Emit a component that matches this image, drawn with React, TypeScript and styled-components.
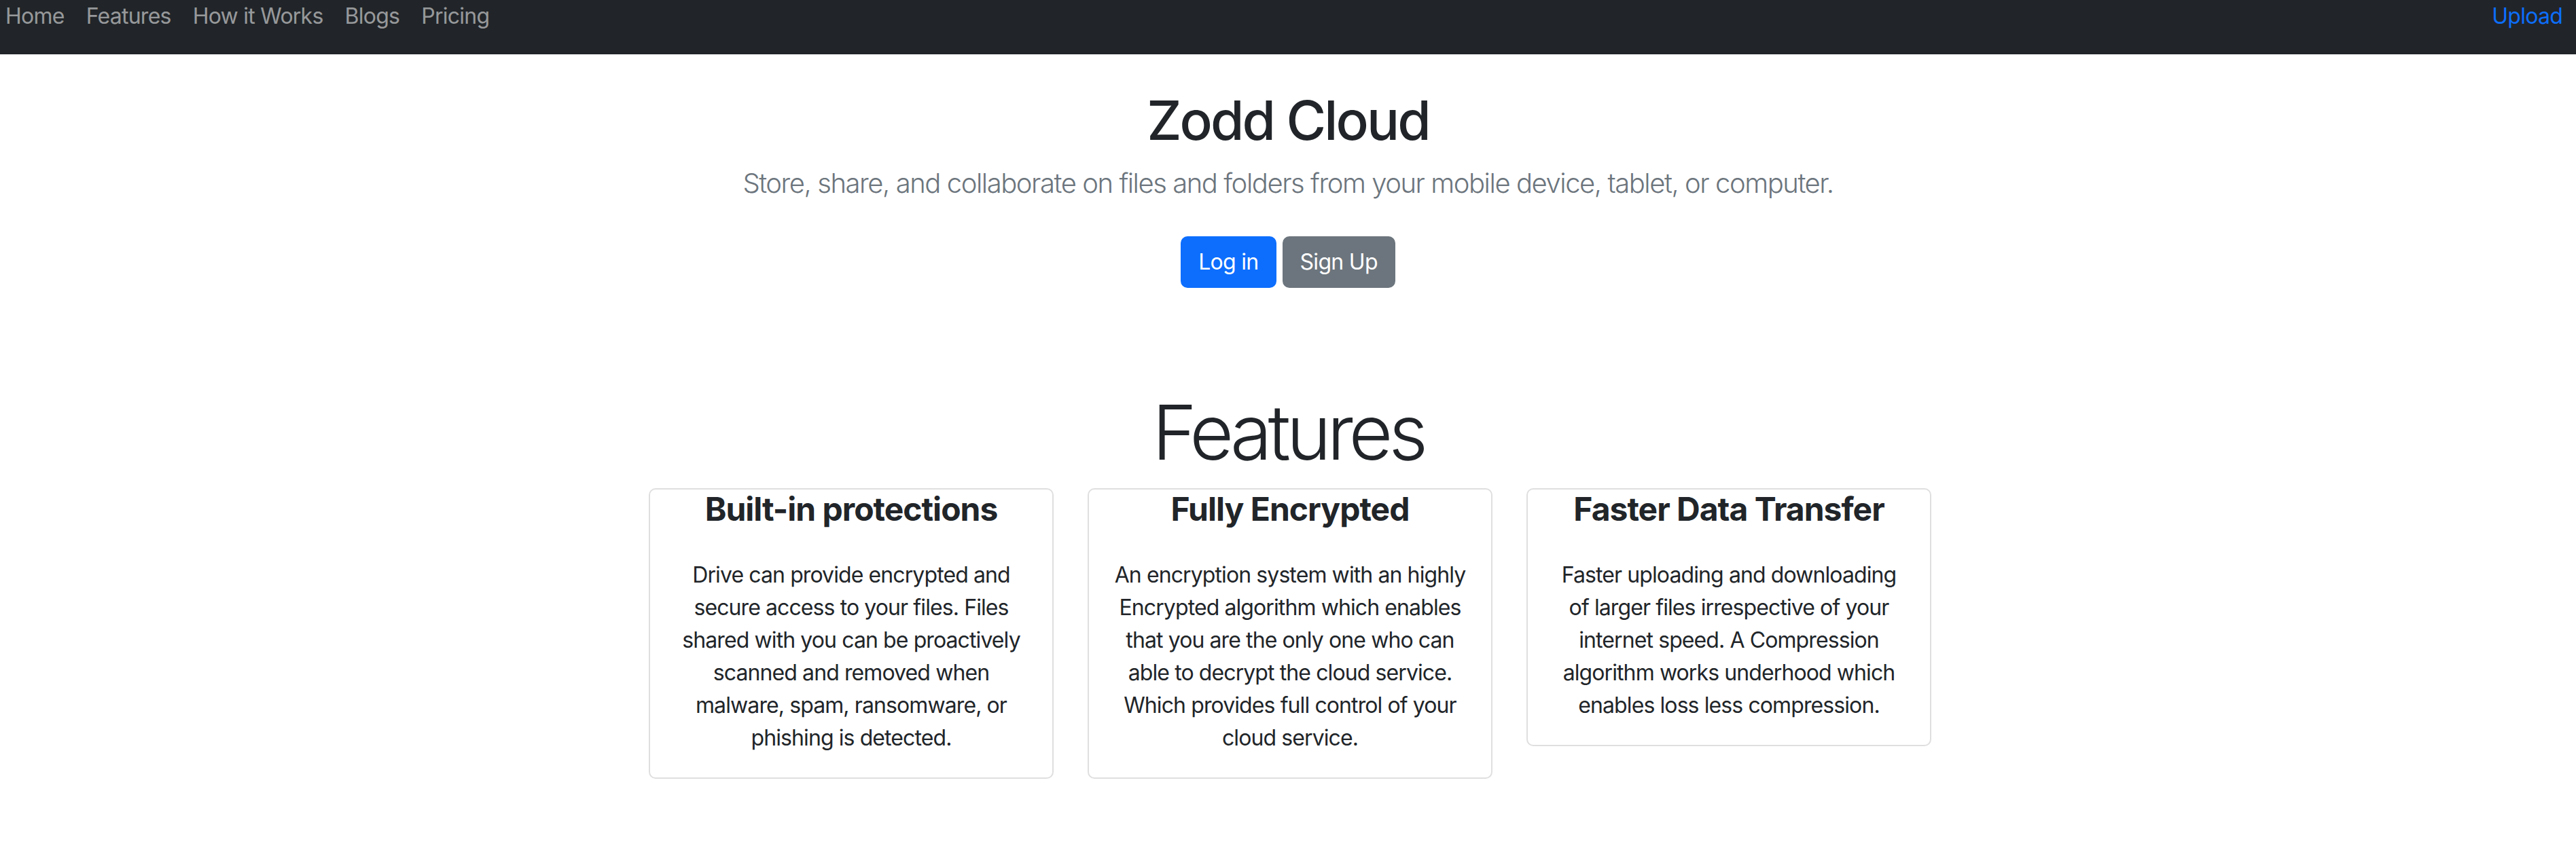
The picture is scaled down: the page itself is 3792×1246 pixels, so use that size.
import React from "react";
import styled, { createGlobalStyle } from "styled-components";

const GlobalStyle = createGlobalStyle`
  html, body {
    margin: 0;
    padding: 0;
    background: #ffffff;
  }
  body {
    font-family: Inter, "Noto Sans", "Liberation Sans", sans-serif;
    color: #212529;
  }
  * { box-sizing: border-box; }
`;

const NavBar = styled.nav`
  height: 80px;
  background: #212529;
  display: flex;
  justify-content: space-between;
  align-items: flex-start;
  padding: 0 20px 0 8px;
`;

const NavList = styled.div`
  display: flex;
  gap: 32px;
`;

const NavLink = styled.a<{ $accent?: boolean }>`
  font-size: 32px;
  line-height: 48px;
  letter-spacing: -0.75px;
  color: ${(p) => (p.$accent ? "#0d6efd" : "rgba(255, 255, 255, 0.55)")};
  text-decoration: none;
  cursor: pointer;
`;

const Hero = styled.header`
  display: flex;
  flex-direction: column;
  align-items: center;
  padding-top: 49px;
`;

const Title = styled.h1`
  margin: 0;
  font-size: 80px;
  line-height: 96px;
  font-weight: 500;
  letter-spacing: -2.9px;
`;

const Lead = styled.p`
  margin: 15px 0 0;
  font-size: 40px;
  line-height: 60px;
  font-weight: 300;
  color: #6c757d;
  letter-spacing: -1.45px;
`;

const ButtonRow = styled.div`
  display: flex;
  gap: 9px;
  margin-top: 48px;
`;

const Button = styled.button<{ $variant: "primary" | "secondary" }>`
  font-family: inherit;
  font-size: 32px;
  line-height: 48px;
  letter-spacing: -0.7px;
  padding: 12px 24px;
  border-radius: 10px;
  border: 2px solid ${(p) => (p.$variant === "primary" ? "#0d6efd" : "#6c757d")};
  background: ${(p) => (p.$variant === "primary" ? "#0d6efd" : "#6c757d")};
  color: #ffffff;
  cursor: pointer;
`;

const FeaturesSection = styled.section`
  display: flex;
  flex-direction: column;
  align-items: center;
  margin-top: 145px;
`;

const SectionHeading = styled.h2`
  margin: 0;
  font-size: 112px;
  line-height: 134px;
  font-weight: 300;
  letter-spacing: -6.2px;
`;

const CardRow = styled.div`
  display: flex;
  align-items: flex-start;
  justify-content: center;
  gap: 50px;
  margin-top: 16px;
  padding-left: 6px;
`;

const Card = styled.article`
  width: 596px;
  border: 2px solid #dfdfdf;
  border-radius: 10px;
  display: flex;
  flex-direction: column;
  align-items: center;
  padding: 0 16px 34px;
  text-align: center;
`;

const CardTitle = styled.h3`
  margin: 0;
  font-size: 48px;
  line-height: 57.6px;
  font-weight: 700;
  letter-spacing: -1px;
`;

const CardText = styled.p`
  margin: 44px 0 0;
  font-size: 32px;
  line-height: 48px;
  font-weight: 400;
  letter-spacing: -0.9px;
  white-space: nowrap;
`;

const features: { title: string; lines: string[] }[] = [
  {
    title: "Built-in protections",
    lines: [
      "Drive can provide encrypted and",
      "secure access to your files. Files",
      "shared with you can be proactively",
      "scanned and removed when",
      "malware, spam, ransomware, or",
      "phishing is detected.",
    ],
  },
  {
    title: "Fully Encrypted",
    lines: [
      "An encryption system with an highly",
      "Encrypted algorithm which enables",
      "that you are the only one who can",
      "able to decrypt the cloud service.",
      "Which provides full control of your",
      "cloud service.",
    ],
  },
  {
    title: "Faster Data Transfer",
    lines: [
      "Faster uploading and downloading",
      "of larger files irrespective of your",
      "internet speed. A Compression",
      "algorithm works underhood which",
      "enables loss less compression.",
    ],
  },
];

export default function App() {
  return (
    <>
      <GlobalStyle />
      <NavBar>
        <NavList>
          <NavLink>Home</NavLink>
          <NavLink>Features</NavLink>
          <NavLink>How it Works</NavLink>
          <NavLink>Blogs</NavLink>
          <NavLink>Pricing</NavLink>
        </NavList>
        <NavLink $accent>Upload</NavLink>
      </NavBar>
      <Hero>
        <Title>Zodd Cloud</Title>
        <Lead>
          Store, share, and collaborate on files and folders from your mobile device, tablet, or computer.
        </Lead>
        <ButtonRow>
          <Button $variant="primary">Log in</Button>
          <Button $variant="secondary">Sign Up</Button>
        </ButtonRow>
      </Hero>
      <FeaturesSection>
        <SectionHeading>Features</SectionHeading>
        <CardRow>
          {features.map((f) => (
            <Card key={f.title}>
              <CardTitle>{f.title}</CardTitle>
              <CardText>
                {f.lines.map((l, i) => (
                  <React.Fragment key={i}>
                    {l}
                    {i < f.lines.length - 1 && <br />}
                  </React.Fragment>
                ))}
              </CardText>
            </Card>
          ))}
        </CardRow>
      </FeaturesSection>
    </>
  );
}
